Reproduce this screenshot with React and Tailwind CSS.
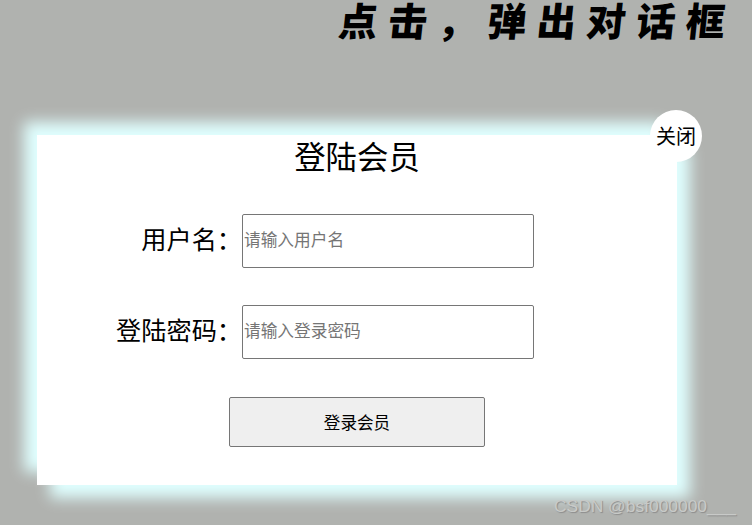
import React from "react";

const cjk = "font-['Noto_Sans_CJK_SC',sans-serif]";

const Field = ({ label, placeholder, className = "" }) => (
    <div className={`flex items-center ${className}`}>
        <label className="w-[205px] pb-[4px] text-right text-[25.2px] leading-none text-black">{label}</label>
        <input
            placeholder={placeholder}
            className="w-[292px] h-[54px] border border-[#767676] rounded-[2px] pl-[1px] pb-[4px] text-[16.7px] outline-none placeholder:text-[#757575]"
        />
    </div>
);

export default function App() {
    return (
        <div className={`relative w-[752px] h-[525px] overflow-hidden bg-[#b0b2af] ${cjk}`}>
            {/* title behind the mask */}
            <div className="flex justify-end h-[135px] pr-[16px]">
                <h1 className="h-[40px] text-[39px] leading-[39px] font-black tracking-[10.6px] whitespace-nowrap text-black -skew-x-6">
                    点击，弹出对话框
                </h1>
            </div>

            {/* dialog */}
            <div className="relative ml-[37px] w-[640px] h-[350px] bg-white shadow-[-13px_-13px_14px_#e0ffff,13px_13px_14px_#e0ffff]">
                <button className="absolute -top-[25px] -right-[25px] w-[52px] h-[52px] rounded-full bg-white text-[20px] leading-none text-black">
                    关闭
                </button>
                <h2 className="pb-[2px] text-center text-[31.4px] leading-[42px] font-normal text-black">登陆会员</h2>
                <Field label="用户名：" placeholder="请输入用户名" className="mt-[35px]" />
                <Field label="登陆密码：" placeholder="请输入登录密码" className="mt-[37px]" />
                <div className="mt-[38px] pl-[192px]">
                    <button className="w-[256px] h-[50px] border border-[#767676] rounded-[2px] bg-[#efefef] text-[16.6px] text-black">
                        登录会员
                    </button>
                </div>
            </div>

            {/* watermark */}
            <span className="absolute left-[554px] top-[495px] font-['Liberation_Sans',sans-serif] text-[17.4px] leading-[22px] text-[#c8cac8] [text-shadow:1px_1px_1px_#8c8c8c]">
                CSDN @bsf000000___
            </span>
        </div>
    );
}
